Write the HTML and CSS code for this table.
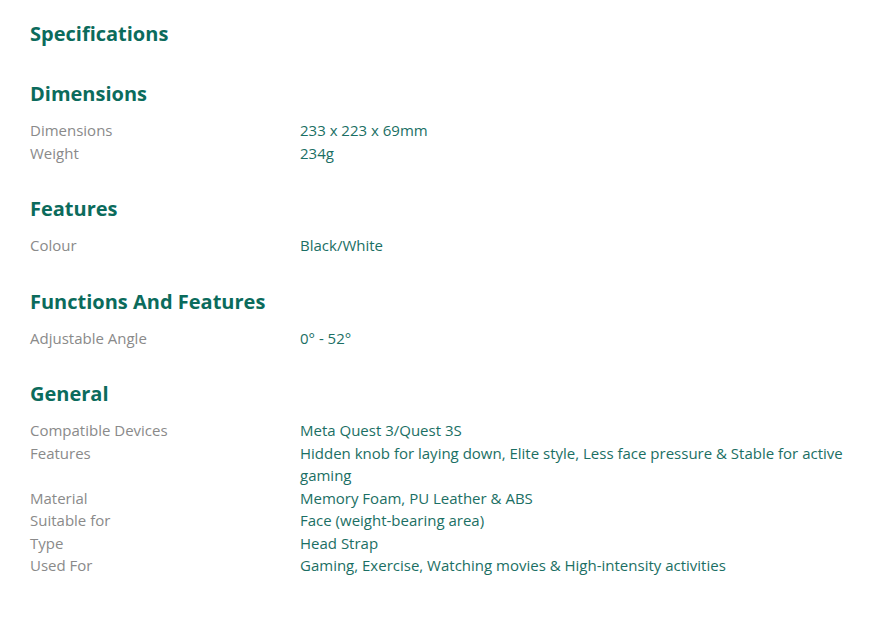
FILE: index.html
```html
<!DOCTYPE html>
<html lang="en">
<head>
<meta charset="utf-8">
<title>Specifications</title>
<link rel="stylesheet" href="styles.css">
</head>
<body>
<main class="specs">
  <h2 class="specs-title">Specifications</h2>

  <section class="group">
    <h3 class="group-title">Dimensions</h3>
    <dl class="rows">
      <dt>Dimensions</dt><dd>233 x 223 x 69mm</dd>
      <dt>Weight</dt><dd>234g</dd>
    </dl>
  </section>

  <section class="group">
    <h3 class="group-title">Features</h3>
    <dl class="rows">
      <dt>Colour</dt><dd>Black/White</dd>
    </dl>
  </section>

  <section class="group">
    <h3 class="group-title">Functions And Features</h3>
    <dl class="rows">
      <dt>Adjustable Angle</dt><dd>0° - 52°</dd>
    </dl>
  </section>

  <section class="group">
    <h3 class="group-title">General</h3>
    <dl class="rows">
      <dt>Compatible Devices</dt><dd>Meta Quest 3/Quest 3S</dd>
      <dt>Features</dt><dd>Hidden knob for laying down, Elite style, Less face pressure &amp; Stable for active gaming</dd>
      <dt>Material</dt><dd>Memory Foam, PU Leather &amp; ABS</dd>
      <dt>Suitable for</dt><dd>Face (weight-bearing area)</dd>
      <dt>Type</dt><dd>Head Strap</dd>
      <dt>Used For</dt><dd>Gaming, Exercise, Watching movies &amp; High-intensity activities</dd>
    </dl>
  </section>
</main>
</body>
</html>
```

FILE: styles.css
```css
html, body {
  margin: 0;
  padding: 0;
  background: #ffffff;
}

body {
  font-family: "Open Sans", "Liberation Sans", sans-serif;
  font-size: 15px;
}

.specs {
  width: 816px;
  padding: 20px 30px;
  display: flex;
  flex-direction: column;
  gap: 31px;
}

.specs-title,
.group-title {
  margin: 0;
  font-size: 20px;
  line-height: 28px;
  font-weight: 700;
  color: #0b6b5c;
}

.specs-title {
  margin-bottom: 1px;
}

.group {
  display: flex;
  flex-direction: column;
  gap: 11px;
}

.rows {
  margin: 0;
  display: grid;
  grid-template-columns: 270px 1fr;
  line-height: 22.5px;
}

.rows dt {
  color: #8a8a8a;
}

.rows dd {
  margin: 0;
  color: #1b6f64;
}
```
